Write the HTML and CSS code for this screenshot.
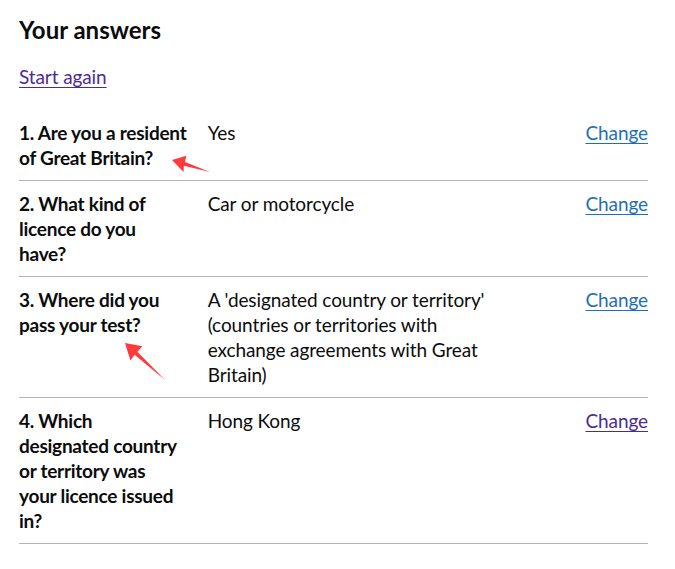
FILE: index.html
```html
<!DOCTYPE html>
<html lang="en">
<head>
<meta charset="utf-8">
<title>Your answers</title>
<link rel="stylesheet" href="styles.css">
</head>
<body>
<main class="page">
  <h1 class="heading">Your answers</h1>
  <p class="start"><a class="link link-visited" href="#start">Start again</a></p>
  <dl class="summary">
    <div class="row">
      <dt class="key">1. Are you a resident<br>of Great Britain?</dt>
      <dd class="value">Yes</dd>
      <dd class="actions"><a class="link" href="#q1">Change</a></dd>
    </div>
    <div class="row">
      <dt class="key">2. What kind of<br>licence do you<br>have?</dt>
      <dd class="value">Car or motorcycle</dd>
      <dd class="actions"><a class="link" href="#q2">Change</a></dd>
    </div>
    <div class="row">
      <dt class="key">3. Where did you<br>pass your test?</dt>
      <dd class="value">A 'designated country or territory' (countries or territories with exchange agreements with Great Britain)</dd>
      <dd class="actions"><a class="link" href="#q3">Change</a></dd>
    </div>
    <div class="row">
      <dt class="key">4. Which<br>designated country<br>or territory was<br>your licence issued<br>in?</dt>
      <dd class="value">Hong Kong</dd>
      <dd class="actions"><a class="link link-visited" href="#q4">Change</a></dd>
    </div>
  </dl>
</main>
<svg class="annotations" width="675" height="569" viewBox="0 0 675 569" aria-hidden="true">
  <polygon class="arrow" points="172,160 186.3,155.8 185,162 210,172 183.8,165.8 183.5,172"/>
  <polygon class="arrow" points="125,343 142.4,346.3 137.4,351.7 165,380 134.6,354.7 130.4,360.6"/>
</svg>
</body>
</html>
```
FILE: styles.css
```css
html, body {
  margin: 0;
  padding: 0;
  background: #ffffff;
}

body {
  position: relative;
  font-family: Lato, "Liberation Sans", Arial, sans-serif;
  color: #0b0c0c;
}

.page {
  width: 629px;
  margin: 0 0 0 19px;
  padding-top: 15px;
}

.heading {
  margin: 0 0 19px;
  font-size: 24px;
  line-height: 30px;
  font-weight: 700;
}

.start {
  margin: 0 0 21px;
  font-size: 19px;
  line-height: 25px;
  letter-spacing: -0.1px;
}

.link {
  color: #1d70b8;
  text-decoration: underline;
  text-decoration-thickness: 1px;
  text-underline-offset: 3px;
}

.link-visited {
  color: #4c2c92;
}

.summary {
  margin: 0;
  padding: 0;
  font-size: 19px;
  line-height: 25px;
}

.row {
  display: grid;
  grid-template-columns: 30% 50% 20%;
  border-bottom: 1px solid #b1b4b6;
}

.key,
.value,
.actions {
  margin: 0;
  padding: 10px 20px 10px 0;
}

.key {
  font-weight: 700;
  letter-spacing: -0.25px;
  white-space: nowrap;
}

.value {
  letter-spacing: -0.1px;
}

.actions {
  padding-right: 0;
  text-align: right;
  letter-spacing: -0.1px;
}

.annotations {
  position: absolute;
  top: 0;
  left: 0;
  pointer-events: none;
}

.arrow {
  fill: #ff3a3a;
}
```
